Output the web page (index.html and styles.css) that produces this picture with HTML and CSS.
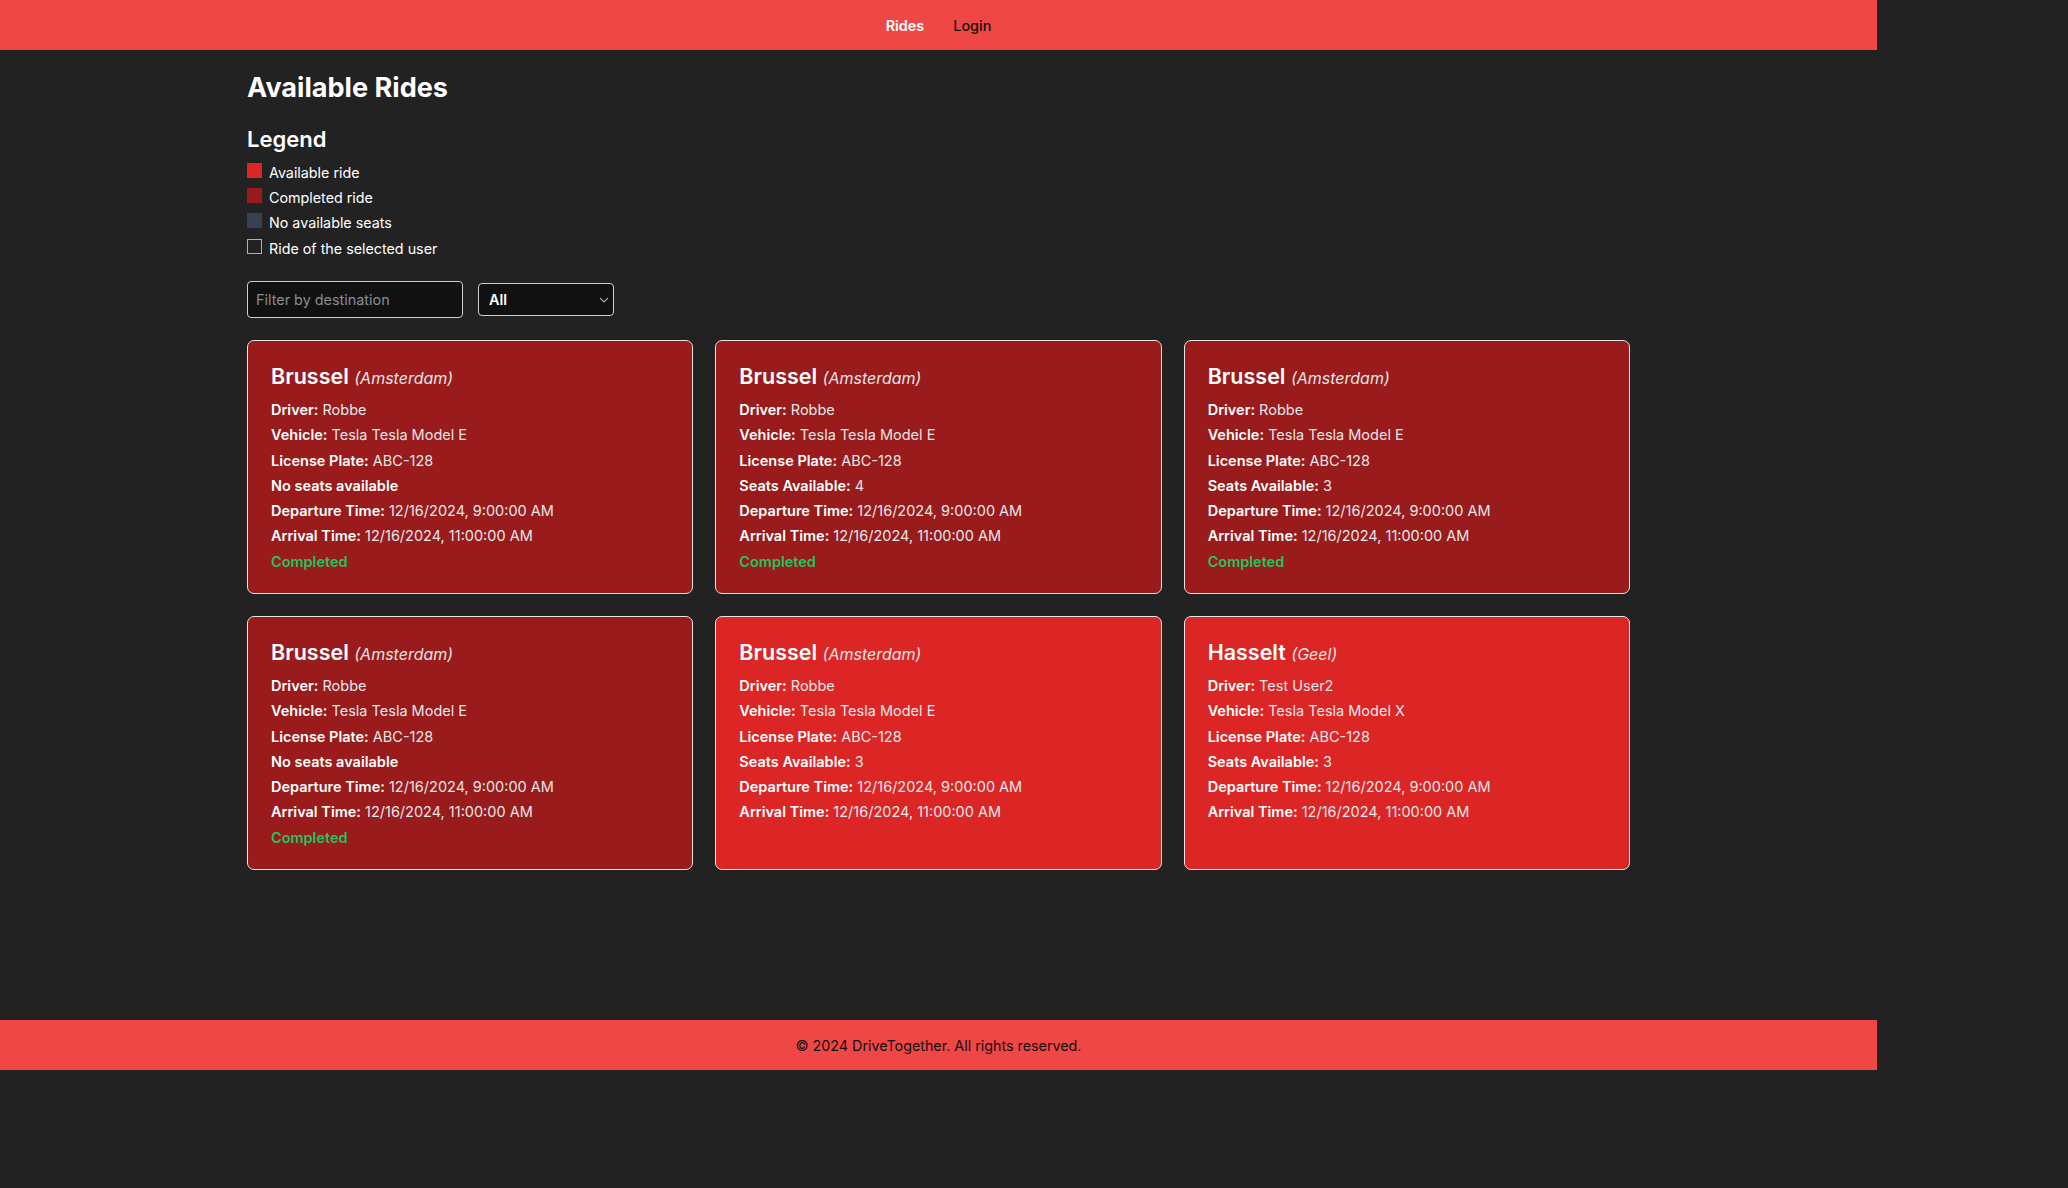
FILE: index.html
```html
<!DOCTYPE html>
<html lang="en">
<head>
<meta charset="utf-8">
<title>DriveTogether</title>
<link rel="stylesheet" href="styles.css">
</head>
<body>
<div class="page">
  <header class="topbar">
    <nav class="nav">
      <a class="nav-link active" href="#">Rides</a>
      <a class="nav-link" href="#">Login</a>
    </nav>
  </header>
  <main class="main">
    <div class="container">
      <h1 class="page-title">Available Rides</h1>
      <section class="legend">
        <h2 class="legend-title">Legend</h2>
        <ul class="legend-list">
          <li class="legend-item"><span class="swatch swatch-available"></span>Available ride</li>
          <li class="legend-item"><span class="swatch swatch-completed"></span>Completed ride</li>
          <li class="legend-item"><span class="swatch swatch-full"></span>No available seats</li>
          <li class="legend-item"><span class="swatch swatch-selected"></span>Ride of the selected user</li>
        </ul>
      </section>
      <div class="filters">
        <input class="filter-input" type="text" placeholder="Filter by destination">
        <div class="select-wrap">
          <select class="filter-select"><option>All</option></select>
          <svg class="chevron" viewBox="0 0 10 6" width="10" height="6"><path d="M1 1l4 4 4-4" fill="none" stroke="#9ca3af" stroke-width="1.2"/></svg>
        </div>
      </div>
      <div class="grid">
        <article class="card card-completed">
          <h3 class="card-title">Brussel <span class="card-origin">(Amsterdam)</span></h3>
          <p class="row"><b>Driver:</b> Robbe</p>
          <p class="row"><b>Vehicle:</b> Tesla Tesla Model E</p>
          <p class="row"><b>License Plate:</b> ABC-128</p>
          <p class="row"><b>No seats available</b></p>
          <p class="row"><b>Departure Time:</b> 12/16/2024, 9:00:00 AM</p>
          <p class="row"><b>Arrival Time:</b> 12/16/2024, 11:00:00 AM</p>
          <p class="row status">Completed</p>
        </article>
        <article class="card card-completed">
          <h3 class="card-title">Brussel <span class="card-origin">(Amsterdam)</span></h3>
          <p class="row"><b>Driver:</b> Robbe</p>
          <p class="row"><b>Vehicle:</b> Tesla Tesla Model E</p>
          <p class="row"><b>License Plate:</b> ABC-128</p>
          <p class="row"><b>Seats Available:</b> 4</p>
          <p class="row"><b>Departure Time:</b> 12/16/2024, 9:00:00 AM</p>
          <p class="row"><b>Arrival Time:</b> 12/16/2024, 11:00:00 AM</p>
          <p class="row status">Completed</p>
        </article>
        <article class="card card-completed">
          <h3 class="card-title">Brussel <span class="card-origin">(Amsterdam)</span></h3>
          <p class="row"><b>Driver:</b> Robbe</p>
          <p class="row"><b>Vehicle:</b> Tesla Tesla Model E</p>
          <p class="row"><b>License Plate:</b> ABC-128</p>
          <p class="row"><b>Seats Available:</b> 3</p>
          <p class="row"><b>Departure Time:</b> 12/16/2024, 9:00:00 AM</p>
          <p class="row"><b>Arrival Time:</b> 12/16/2024, 11:00:00 AM</p>
          <p class="row status">Completed</p>
        </article>
        <article class="card card-completed">
          <h3 class="card-title">Brussel <span class="card-origin">(Amsterdam)</span></h3>
          <p class="row"><b>Driver:</b> Robbe</p>
          <p class="row"><b>Vehicle:</b> Tesla Tesla Model E</p>
          <p class="row"><b>License Plate:</b> ABC-128</p>
          <p class="row"><b>No seats available</b></p>
          <p class="row"><b>Departure Time:</b> 12/16/2024, 9:00:00 AM</p>
          <p class="row"><b>Arrival Time:</b> 12/16/2024, 11:00:00 AM</p>
          <p class="row status">Completed</p>
        </article>
        <article class="card card-available">
          <h3 class="card-title">Brussel <span class="card-origin">(Amsterdam)</span></h3>
          <p class="row"><b>Driver:</b> Robbe</p>
          <p class="row"><b>Vehicle:</b> Tesla Tesla Model E</p>
          <p class="row"><b>License Plate:</b> ABC-128</p>
          <p class="row"><b>Seats Available:</b> 3</p>
          <p class="row"><b>Departure Time:</b> 12/16/2024, 9:00:00 AM</p>
          <p class="row"><b>Arrival Time:</b> 12/16/2024, 11:00:00 AM</p>
        </article>
        <article class="card card-available">
          <h3 class="card-title">Hasselt <span class="card-origin">(Geel)</span></h3>
          <p class="row"><b>Driver:</b> Test User2</p>
          <p class="row"><b>Vehicle:</b> Tesla Tesla Model X</p>
          <p class="row"><b>License Plate:</b> ABC-128</p>
          <p class="row"><b>Seats Available:</b> 3</p>
          <p class="row"><b>Departure Time:</b> 12/16/2024, 9:00:00 AM</p>
          <p class="row"><b>Arrival Time:</b> 12/16/2024, 11:00:00 AM</p>
        </article>
      </div>
    </div>
  </main>
  <footer class="footer">
    <p class="footer-text">© 2024 DriveTogether. All rights reserved.</p>
  </footer>
</div>
</body>
</html>
```

FILE: styles.css
```css
* { box-sizing: border-box; }

html {
  background: #222222;
}

body {
  margin: 0;
  background: #222222;
  color: #ffffff;
  font-family: Inter, "Noto Sans", sans-serif;
  font-size: 14.3px;
}

.page {
  width: 1877px;
}

.topbar {
  height: 50px;
  background: #ef4646;
  display: flex;
  align-items: center;
  justify-content: center;
}

.nav {
  display: flex;
  gap: 29px;
}

.nav-link {
  color: #111111;
  text-decoration: none;
  font-size: 14.4px;
  font-weight: 500;
}

.nav-link.active {
  color: #ffffff;
  font-weight: 600;
}

.main {
  min-height: 970px;
}

.container {
  width: 1383px;
  margin: 0 auto;
  padding-top: 20px;
}

.page-title {
  margin: 0;
  font-size: 27.1px;
  font-weight: 700;
  line-height: 36px;
}

.legend {
  margin-top: 18px;
}

.legend-title {
  margin: 0;
  font-size: 22px;
  font-weight: 600;
  line-height: 30px;
}

.legend-list {
  list-style: none;
  margin: 7px 0 0;
  padding: 0;
  display: flex;
  flex-direction: column;
  gap: 3px;
}

.legend-item {
  display: flex;
  align-items: center;
  gap: 7px;
  height: 22px;
  font-size: 14.3px;
}

.legend-item:last-child {
  margin-top: 1px;
}

.swatch {
  width: 15px;
  height: 15px;
  flex: none;
  margin-top: -4px;
}

.swatch-available { background: #dc2626; }
.swatch-completed { background: #991b1b; }
.swatch-full { background: #374151; }
.swatch-selected { border: 1px solid #eab308; }

.filters {
  margin-top: 22px;
  display: flex;
  align-items: center;
  gap: 15px;
}

.filter-input {
  width: 216px;
  height: 37px;
  background: #111111;
  border: 1px solid #cfcfcf;
  border-radius: 4px;
  color: #ffffff;
  font-family: Inter, sans-serif;
  font-size: 14.4px;
  padding: 0 8px;
  outline: none;
}

.filter-input::placeholder {
  color: #8c8c94;
}

.select-wrap {
  position: relative;
  width: 136px;
  height: 33px;
}

.filter-select {
  width: 100%;
  height: 100%;
  appearance: none;
  background: #111111;
  border: 1px solid #cfcfcf;
  border-radius: 4px;
  color: #ffffff;
  font-family: Inter, sans-serif;
  font-size: 14.4px;
  font-weight: 600;
  padding: 0 10px;
}

.chevron {
  position: absolute;
  right: 5px;
  top: 14px;
}

.grid {
  margin-top: 22px;
  display: grid;
  grid-template-columns: repeat(3, 1fr);
  column-gap: 22px;
  row-gap: 22px;
}

.card {
  border: 1px solid #e5e5e5;
  border-radius: 7px;
  padding: 21px 23px 17px;
  min-height: 254px;
}

.card-completed { background: #991b1b; }
.card-available { background: #dc2626; }

.card-title {
  margin: 0 0 5px;
  font-size: 21.5px;
  font-weight: 600;
  line-height: 28px;
}

.card-origin {
  font-size: 16px;
  font-style: italic;
  font-weight: 400;
  color: #e5e5e5;
}

.row {
  margin: 0;
  line-height: 25.3px;
  font-size: 14.5px;
  color: #e5e7eb;
}

.row b {
  color: #ffffff;
  font-weight: 600;
}

.status {
  color: #22c55e;
  font-weight: 600;
}

.footer {
  height: 50px;
  background: #ef4646;
  display: flex;
  align-items: center;
  justify-content: center;
}

.footer-text {
  margin: 0;
  color: #111111;
  font-size: 14.3px;
}
```
